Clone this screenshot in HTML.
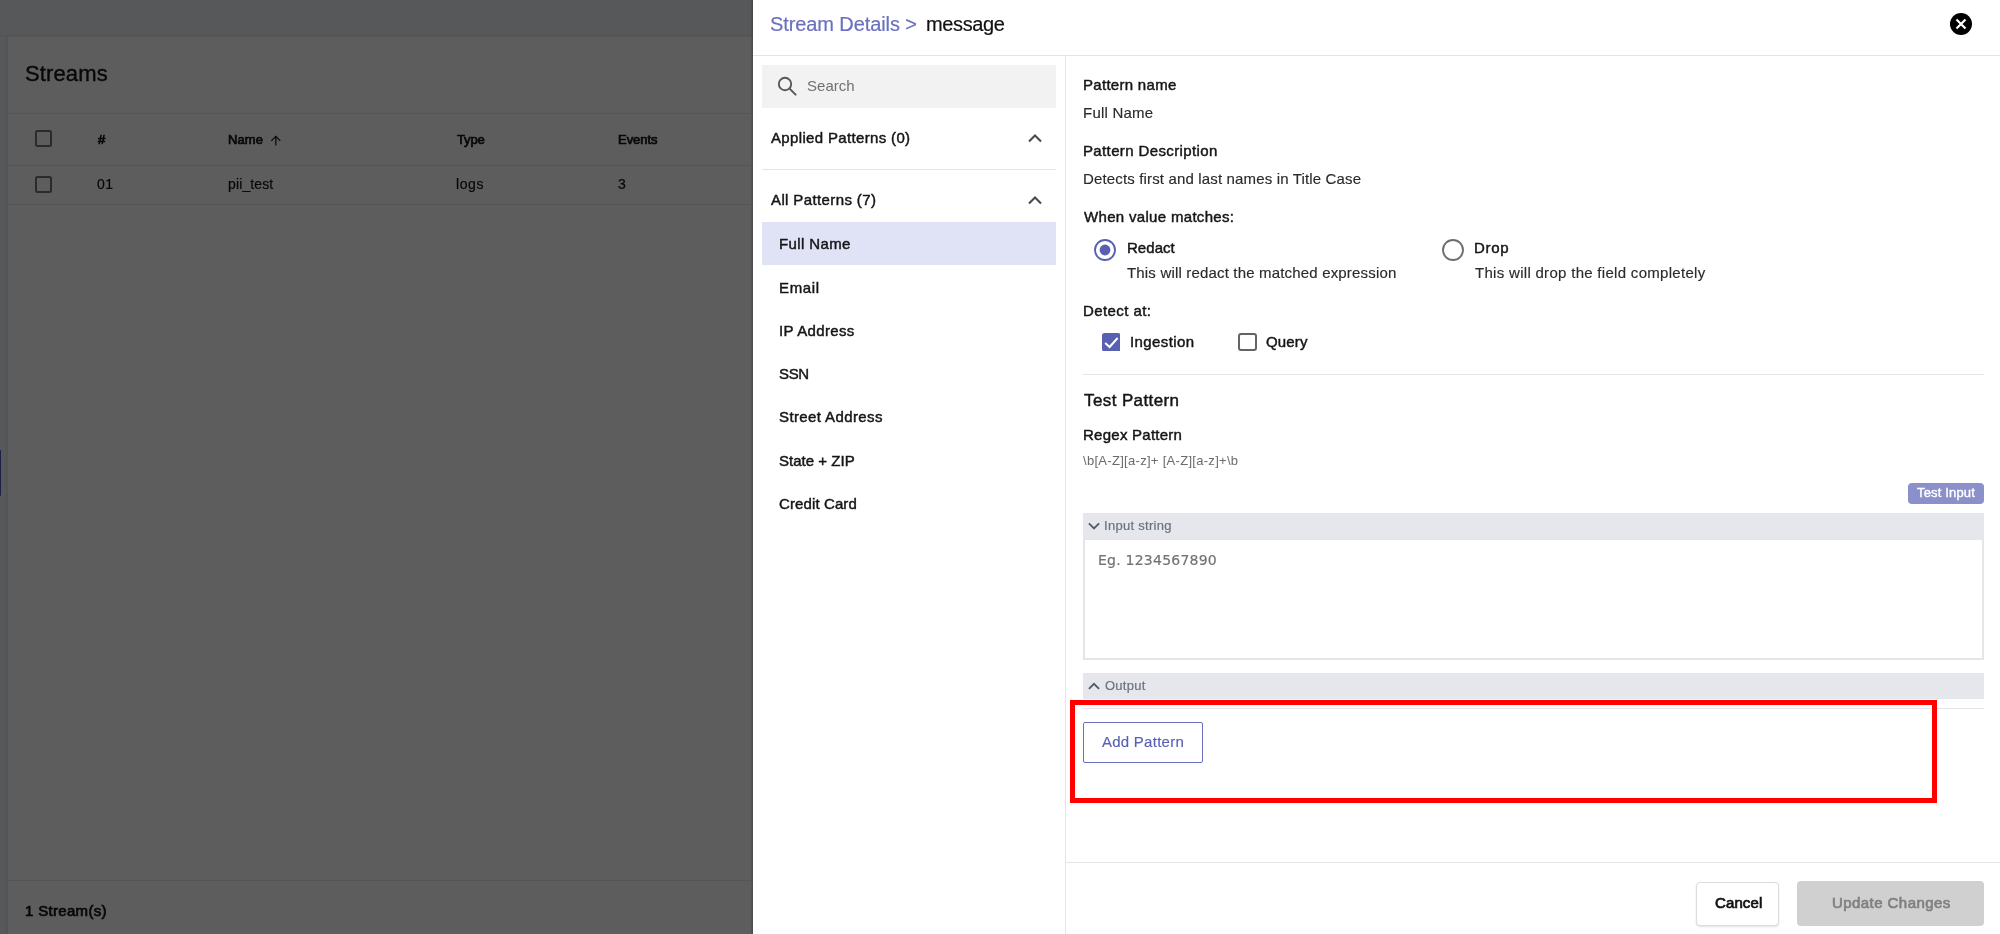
<!DOCTYPE html>
<html lang="en">
<head>
<meta charset="utf-8">
<title>Stream Details</title>
<style>
*{box-sizing:border-box;margin:0;padding:0}
html,body{width:2000px;height:934px;overflow:hidden;background:#5d5d5d;font-family:"Liberation Sans",sans-serif;color:#111}
.abs,.t{position:absolute}
.t{white-space:nowrap;line-height:20px;will-change:transform}
/* ---------- dimmed background page ---------- */
#bg{position:absolute;left:0;top:0;width:753px;height:934px;background:#5d5d5d;overflow:hidden}
#bg .topbar{position:absolute;left:0;top:0;width:753px;height:37px;background:linear-gradient(180deg,#57585a 0,#57585a 35px,#525354 35px,#525354 36px,#565657 36px,#565657 37px)}
#bg .strip{position:absolute;left:0;top:37px;width:8px;height:897px;background:linear-gradient(90deg,#57585a 0,#57585a 6px,#525354 6px,#525354 7px,#555556 7px,#555556 8px)}
#bg .hl{position:absolute;left:8px;width:745px;height:1px;background:#555}
#bg .cb{position:absolute;width:17px;height:17px;border:2px solid #2b2b2b;border-radius:2.5px}
#bg .t{color:#080808;-webkit-text-stroke-width:0.2px}
/* ---------- panel ---------- */
#panel{position:absolute;left:753px;top:0;width:1247px;height:934px;background:#fff}
.line{position:absolute;background:#e4e4e4}
.sb{font-size:15px;font-weight:normal;color:#151515;-webkit-text-stroke-width:0.45px}
.rg{font-size:15px;color:#2a2a2a;-webkit-text-stroke-width:0.15px}
</style>
</head>
<body>
<div id="bg">
  <div class="topbar"></div>
  <div class="strip"></div>
  <div class="abs" style="left:0;top:450px;width:1.3px;height:46px;background:#1e1f47;border-radius:0 1px 1px 0"></div>
  <div class="t" id="b_streams" style="left:25px;top:64px;font-size:22px;-webkit-text-stroke-width:0.35px;letter-spacing:0.12px">Streams</div>
  <div class="abs" style="left:750.6px;top:0;width:2.4px;height:934px;background:linear-gradient(90deg,rgba(0,0,0,.08),rgba(0,0,0,.2))"></div>
  <div class="hl" style="top:113px"></div>
  <div class="cb" style="left:35px;top:130px"></div>
  <div class="t" id="b_hash" style="left:98px;top:130px;font-size:13px;-webkit-text-stroke-width:0.7px">#</div>
  <div class="t" id="b_name" style="left:228px;top:130px;font-size:13px;-webkit-text-stroke-width:0.7px;letter-spacing:0.075px">Name</div>
  <svg class="abs" style="left:270px;top:134.5px" width="12" height="12" viewBox="0 0 12 12"><path d="M5.8 10.6 L5.8 1.4 M1.3 5.9 L5.8 1.3 L10.3 5.9" fill="none" stroke="#0b0b0b" stroke-width="1.25"/></svg>
  <div class="t" id="b_type" style="left:457px;top:130px;font-size:13px;-webkit-text-stroke-width:0.7px;letter-spacing:-0.15px">Type</div>
  <div class="t" id="b_events" style="left:618px;top:130px;font-size:13px;-webkit-text-stroke-width:0.7px;letter-spacing:-0.045px">Events</div>
  <div class="hl" style="top:165px"></div>
  <div class="cb" style="left:35px;top:176px"></div>
  <div class="t" id="b_01" style="left:97px;top:174px;font-size:14px;letter-spacing:0.54px">01</div>
  <div class="t" id="b_pii" style="left:228px;top:174px;font-size:14px;letter-spacing:0.128px">pii_test</div>
  <div class="t" id="b_logs" style="left:456.2px;top:174px;font-size:14px;letter-spacing:0.6px">logs</div>
  <div class="t" id="b_3" style="left:618px;top:174px;font-size:14px">3</div>
  <div class="hl" style="top:204px"></div>
  <div class="hl" style="top:880px"></div>
  <div class="t" id="b_count" style="left:25px;top:901px;font-size:15px;-webkit-text-stroke-width:0.7px;letter-spacing:0.323px">1 Stream(s)</div>
</div>
<div id="panel"></div>
<!-- header -->
<div class="t" id="h_sd" style="left:770px;top:14px;font-size:20px;color:#6a70bf;-webkit-text-stroke-width:0.2px;letter-spacing:-0.096px">Stream Details &gt;</div>
<div class="t" id="h_msg" style="left:926.2px;top:14px;font-size:20px;color:#111;-webkit-text-stroke-width:0.2px;letter-spacing:-0.36px">message</div>
<svg class="abs" style="left:1949px;top:12px" width="24" height="24" viewBox="0 0 24 24"><circle cx="12" cy="12" r="11" fill="#000"/><path d="M7.5 7.5 L16.5 16.5 M16.5 7.5 L7.5 16.5" stroke="#fff" stroke-width="2.2" stroke-linecap="butt"/></svg>
<div class="line" style="left:753px;top:55px;width:1247px;height:1px"></div>
<div class="line" style="left:1065px;top:56px;width:1px;height:878px"></div>
<!-- sidebar -->
<div class="abs" style="left:762px;top:65px;width:294px;height:43px;background:#f2f2f2"></div>
<svg class="abs" style="left:776px;top:75px" width="22" height="22" viewBox="0 0 22 22"><circle cx="9" cy="9" r="6.2" fill="none" stroke="#585858" stroke-width="1.9"/><path d="M13.6 13.6 L19.6 19.6" stroke="#585858" stroke-width="2" stroke-linecap="round"/></svg>
<div class="t" id="s_search" style="left:807px;top:76px;font-size:15px;color:#707070;letter-spacing:0.036px">Search</div>
<div class="t sb" id="s_applied" style="left:771.3px;top:128px;letter-spacing:0.342px">Applied Patterns (0)</div>
<svg class="abs chev" style="left:1027px;top:132px" width="16" height="12" viewBox="0 0 16 12"><path d="M2 9.5 L8 3.5 L14 9.5" fill="none" stroke="#4a4a4a" stroke-width="2.1"/></svg>
<div class="line" style="left:762px;top:169px;width:294px;height:1px"></div>
<div class="t sb" id="s_all" style="left:771.3px;top:190px;letter-spacing:0.384px">All Patterns (7)</div>
<svg class="abs chev" style="left:1027px;top:194px" width="16" height="12" viewBox="0 0 16 12"><path d="M2 9.5 L8 3.5 L14 9.5" fill="none" stroke="#4a4a4a" stroke-width="2.1"/></svg>
<div class="abs" style="left:762px;top:222px;width:294px;height:43px;background:#e0e3f6"></div>
<div class="t sb" id="i_full" style="left:779px;top:234px;letter-spacing:0.379px">Full Name</div>
<div class="t sb" id="i_email" style="left:779px;top:278px;letter-spacing:0.638px">Email</div>
<div class="t sb" id="i_ip" style="left:779px;top:321px;letter-spacing:0.34px">IP Address</div>
<div class="t sb" id="i_ssn" style="left:779px;top:364px;letter-spacing:-0.36px">SSN</div>
<div class="t sb" id="i_street" style="left:779px;top:407px;letter-spacing:0.389px">Street Address</div>
<div class="t sb" id="i_state" style="left:779px;top:451px;letter-spacing:0.018px">State + ZIP</div>
<div class="t sb" id="i_cc" style="left:779px;top:494px;letter-spacing:0.108px">Credit Card</div>
<!-- form -->
<div class="t sb" id="f_pn" style="left:1083px;top:75px;letter-spacing:0.292px">Pattern name</div>
<div class="t rg" id="f_fn" style="left:1083px;top:103px;letter-spacing:0.225px">Full Name</div>
<div class="t sb" id="f_pd" style="left:1083px;top:141px;letter-spacing:0.37px">Pattern Description</div>
<div class="t rg" id="f_desc" style="left:1083px;top:169px;letter-spacing:0.154px">Detects first and last names in Title Case</div>
<div class="t sb" id="f_when" style="left:1084.4px;top:207px;letter-spacing:0.32px">When value matches:</div>
<svg class="abs" style="left:1093px;top:238.2px" width="24" height="24" viewBox="0 0 24 24"><circle cx="12" cy="12" r="10" fill="none" stroke="#5960b2" stroke-width="1.9"/><circle cx="12" cy="12" r="5.4" fill="#5960b2"/></svg>
<div class="t sb" id="f_redact" style="left:1127px;top:238px;letter-spacing:0.036px">Redact</div>
<div class="t rg" id="f_rsub" style="left:1127px;top:263px;letter-spacing:0.175px">This will redact the matched expression</div>
<svg class="abs" style="left:1441px;top:238.2px" width="24" height="24" viewBox="0 0 24 24"><circle cx="12" cy="12" r="10" fill="none" stroke="#6e6e6e" stroke-width="1.9"/></svg>
<div class="t sb" id="f_drop" style="left:1474.2px;top:238px;letter-spacing:0.72px">Drop</div>
<div class="t rg" id="f_dsub" style="left:1475px;top:263px;letter-spacing:0.298px">This will drop the field completely</div>
<div class="t sb" id="f_detect" style="left:1083px;top:301px;letter-spacing:0.42px">Detect at:</div>
<svg class="abs" style="left:1101.8px;top:332.6px" width="18.5" height="18.5" viewBox="0 0 18.5 18.5"><rect x="0" y="0" width="18.5" height="18.5" rx="2.6" fill="#5960b2"/><path d="M3.2 10 L7.6 14 L15.6 5" fill="none" stroke="#fff" stroke-width="2"/></svg>
<div class="t sb" id="f_ing" style="left:1130px;top:332px;letter-spacing:0.408px">Ingestion</div>
<div class="abs" style="left:1237.5px;top:332.6px;width:19px;height:18.5px;border:2px solid #646464;border-radius:3px"></div>
<div class="t sb" id="f_query" style="left:1266px;top:332px;letter-spacing:0.143px">Query</div>
<div class="line" style="left:1083px;top:374px;width:901px;height:1px"></div>
<div class="t sb" id="f_test" style="left:1084.3px;top:391px;font-size:17px;letter-spacing:0.395px">Test Pattern</div>
<div class="t sb" id="f_regex" style="left:1083px;top:425px;letter-spacing:0.255px">Regex Pattern</div>
<div class="t" id="f_re" style="left:1083px;top:451px;font-size:13px;color:#6b6b6b;letter-spacing:0.297px">\b[A-Z][a-z]+ [A-Z][a-z]+\b</div>
<div class="abs" style="left:1908px;top:483px;width:76px;height:21px;background:#8b8fca;border-radius:4px"></div>
<div class="t" id="f_ti" style="left:1917px;top:483px;font-size:13px;-webkit-text-stroke-width:0.4px;color:#fff;letter-spacing:0.16px">Test Input</div>
<div class="abs" style="left:1083px;top:513px;width:901px;height:27px;background:#e6e7ec"></div>
<svg class="abs" style="left:1088px;top:521px" width="12" height="10" viewBox="0 0 12 10"><path d="M0.9 2.3 L6 7.4 L11.1 2.3" fill="none" stroke="#525c6b" stroke-width="1.9"/></svg>
<div class="t" id="f_is" style="left:1104.2px;top:516px;font-size:13px;color:#6b7280;-webkit-text-stroke-width:0.2px;letter-spacing:0.281px">Input string</div>
<div class="abs" style="left:1083px;top:539px;width:901px;height:121px;border:2px solid #e5e5e5;border-top-width:1px;background:#fff"></div>
<div class="t" id="f_ph" style="left:1098px;top:550px;font-size:14px;color:#737373;-webkit-text-stroke-width:0.2px;font-family:'DejaVu Sans','Liberation Sans',sans-serif;letter-spacing:0.235px">Eg. 1234567890</div>
<div class="abs" style="left:1083px;top:673px;width:901px;height:26px;background:#e6e7ec"></div>
<svg class="abs" style="left:1088px;top:681px" width="12" height="10" viewBox="0 0 12 10"><path d="M0.9 7.9 L6 2.8 L11.1 7.9" fill="none" stroke="#525c6b" stroke-width="1.9"/></svg>
<div class="t" id="f_out" style="left:1105px;top:676px;font-size:13px;color:#6b7280;-webkit-text-stroke-width:0.2px;letter-spacing:0.252px">Output</div>
<div class="line" style="left:1083px;top:708px;width:901px;height:1px"></div>
<div class="abs" style="left:1083px;top:722px;width:120px;height:41px;border:1px solid #6a70bb;border-radius:2px"></div>
<div class="t rg" id="f_add" style="left:1102px;top:732px;color:#5960b2;letter-spacing:0.252px">Add Pattern</div>
<div class="abs" style="left:1070px;top:700px;width:867px;height:103px;border:5px solid #fe0000"></div>
<!-- footer -->
<div class="line" style="left:1066px;top:862px;width:934px;height:1px"></div>
<div class="abs" style="left:1696px;top:882px;width:83px;height:44px;border:1px solid #dcdcdc;border-radius:4px;background:#fff;box-shadow:0 1px 2px rgba(0,0,0,.12)"></div>
<div class="t" id="f_cancel" style="left:1715px;top:893px;font-size:15px;-webkit-text-stroke-width:0.7px;color:#111;letter-spacing:0.108px">Cancel</div>
<div class="abs" style="left:1797px;top:881px;width:187px;height:45px;background:#d0d0d0;border-radius:4px"></div>
<div class="t" id="f_upd" style="left:1832px;top:893px;font-size:15px;-webkit-text-stroke-width:0.7px;color:#808080;letter-spacing:0.435px">Update Changes</div>
</body>
</html>
